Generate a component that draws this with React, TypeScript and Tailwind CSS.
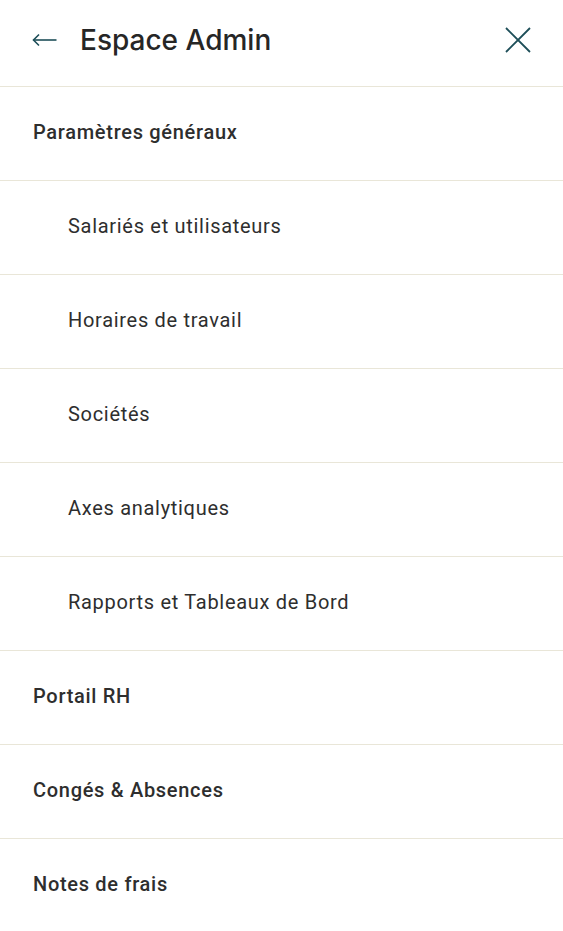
import React from "react";

type MenuItem = {
    label: string;
    sub?: boolean;
};

const items: MenuItem[] = [
    { label: "Paramètres généraux" },
    { label: "Salariés et utilisateurs", sub: true },
    { label: "Horaires de travail", sub: true },
    { label: "Sociétés", sub: true },
    { label: "Axes analytiques", sub: true },
    { label: "Rapports et Tableaux de Bord", sub: true },
    { label: "Portail RH" },
    { label: "Congés & Absences" },
    { label: "Notes de frais" },
];

const App: React.FC = () => {
    return (
        <div className="min-h-screen w-full bg-white font-['Roboto',sans-serif]">
            <header className="flex h-[87px] items-center border-b border-[#e9e6d8] pb-[7px] pl-[32px] pr-[32px]">
                <button aria-label="Retour" className="text-[#1d4e58]">
                    <svg width="25" height="16" viewBox="0 0 25 16" fill="none">
                        <path d="M1.5 8H24.5" stroke="currentColor" strokeWidth="1.6" />
                        <path d="M7 2.5L1.5 8L7 13.5" stroke="currentColor" strokeWidth="1.6" />
                    </svg>
                </button>
                <h1 className="ml-[23px] flex-1 font-['Inter',sans-serif] text-[28px] font-medium tracking-[0px] text-[#262626]">
                    Espace Admin
                </h1>
                <button aria-label="Fermer" className="text-[#1d4e58]">
                    <svg width="26" height="26" viewBox="0 0 26 26" fill="none">
                        <path d="M1 1L25 25M25 1L1 25" stroke="currentColor" strokeWidth="1.8" />
                    </svg>
                </button>
            </header>

            <nav className="flex flex-col">
                {items.map((item) => (
                    <div
                        key={item.label}
                        className={`flex h-[94px] items-center border-b border-[#e9e6d8] pb-[4px] last:border-b-0 text-[20px] tracking-[0.7px] text-[#2e2e2e]
                            ${item.sub ? "pl-[68px] font-normal" : "pl-[33px] font-medium"}`}
                    >
                        {item.label}
                    </div>
                ))}
            </nav>
        </div>
    );
};

export default App;
